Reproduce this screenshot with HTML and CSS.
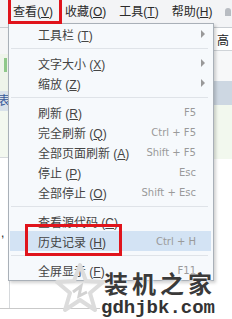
FILE: index.html
```html
<!DOCTYPE html>
<html>
<head>
<meta charset="utf-8">
<link rel="stylesheet" href="styles.css">
</head>
<body>
<div class="bar">
  <span class="mi m1">查看(<u>V</u>)</span>
  <span class="mi m2">收藏(<u>O</u>)</span>
  <span class="mi m3">工具(<u>T</u>)</span>
  <span class="mi m4">帮助(<u>H</u>)</span>
  <span class="pin"></span>
</div>
<div class="page">
  <div class="left">
    <div class="l-top"></div>
    <div class="l-green"><span class="gbar"></span></div>
    <div class="l-band">表</div>
    <div class="l-lgreen"></div>
    <div class="l-white"><span class="comma">,</span></div>
  </div>
  <div class="mid"></div>
  <div class="right">
    <div class="r-top">高</div>
    <div class="r-light"></div>
    <div class="r-band"></div>
    <div class="r-lgreen"></div>
    <div class="r-white"></div>
  </div>
</div>
<div class="bottomline"></div>

<div class="menu">
  <div class="row"><span class="lbl">工具栏 (<u>T</u>)</span><span class="arrow"></span></div>
  <div class="sep"></div>
  <div class="row"><span class="lbl">文字大小 (<u>X</u>)</span><span class="arrow"></span></div>
  <div class="row"><span class="lbl">缩放 (<u>Z</u>)</span><span class="arrow"></span></div>
  <div class="sep"></div>
  <div class="row"><span class="lbl">刷新 (<u>R</u>)</span><span class="key">F5</span></div>
  <div class="row"><span class="lbl">完全刷新 (<u>Q</u>)</span><span class="key">Ctrl + F5</span></div>
  <div class="row"><span class="lbl">全部页面刷新 (<u>A</u>)</span><span class="key">Shift + F5</span></div>
  <div class="row"><span class="lbl">停止 (<u>P</u>)</span><span class="key">Esc</span></div>
  <div class="row"><span class="lbl">全部停止 (<u>O</u>)</span><span class="key">Shift + Esc</span></div>
  <div class="sep"></div>
  <div class="row"><span class="lbl">查看源代码 (<u>C</u>)</span></div>
  <div class="row hl"><span class="lbl">历史记录 (<u>H</u>)</span><span class="key">Ctrl + H</span></div>
  <div class="sep"></div>
  <div class="row"><span class="lbl">全屏显示 (<u>F</u>)</span><span class="key">F11</span></div>
</div>

<div class="redbox"></div>
<div class="redtop"></div>

<svg class="star" width="50" height="52" viewBox="0 0 50 52">
  <path d="M25 3 L31 19 L48 20 L35 31 L40 48 L25 38 L10 48 L15 31 L2 20 L19 19 Z" fill="none" stroke="#dcdcdc" stroke-width="4" stroke-linejoin="round"/>
  <path d="M18 30 L26 24 L24 34 L32 30" fill="none" stroke="#d2d2d2" stroke-width="3"/>
</svg>
<div class="wm">
  <div class="wm1">装机之家</div>
  <div class="wm2">gdhjbk.com</div>
</div>
</body>
</html>
```

FILE: styles.css
```css
html, body {
  margin: 0;
  padding: 0;
}
body {
  width: 232px;
  height: 319px;
  overflow: hidden;
  background: #ffffff;
  font-family: "Liberation Sans", "Noto Sans CJK SC", sans-serif;
  position: relative;
}
u {
  text-decoration: underline;
  text-underline-offset: 1px;
}
.bar {
  height: 28px;
  background: #f3f4f6;
  border-bottom: 1px solid #c9cdd2;
  display: flex;
  align-items: flex-start;
  font-size: 12px;
  color: #2a2a2a;
  padding-left: 13px;
  box-sizing: border-box;
  white-space: nowrap;
  overflow: hidden;
}
.mi {
  flex-shrink: 0;
  line-height: 25px;
}
.m2 {
  margin-left: 12px;
}
.m3 {
  margin-left: 13px;
}
.m4 {
  margin-left: 13px;
}
.pin {
  flex-shrink: 0;
  margin-left: 13px;
  margin-top: 8px;
  width: 6px;
  height: 8px;
  border-radius: 3px 3px 0 0;
  background: #b8bcc2;
}
.page {
  display: flex;
  height: 280px;
}
.left {
  width: 9px;
  display: flex;
  flex-direction: column;
  border-right: 1px solid #d6d9dc;
}
.l-top {
  height: 26px;
  background: #f4f5f6;
}
.l-green {
  height: 37px;
  background: #eef4ea;
  position: relative;
}
.gbar {
  position: absolute;
  left: 4px;
  top: 4px;
  width: 3px;
  height: 14px;
  background: #8fc88a;
}
.l-band {
  height: 20px;
  background: #d9e2ea;
  font-size: 12px;
  line-height: 20px;
  color: #3a5b9a;
  text-indent: -2px;
  overflow: hidden;
}
.l-lgreen {
  height: 46px;
  background: #f3f8ef;
}
.l-white {
  flex: 1;
  background: #fff;
  border-top: 1px solid #d6d9dc;
  position: relative;
}
.comma {
  position: absolute;
  left: 1px;
  top: 68px;
  font-size: 12px;
  color: #222;
}
.mid {
  flex: 1;
  background: #fff;
}
.right {
  width: 18px;
  display: flex;
  flex-direction: column;
}
.r-top {
  height: 22px;
  font-size: 12px;
  line-height: 26px;
  color: #222;
  white-space: nowrap;
  overflow: hidden;
  padding-left: 3px;
  border-bottom: 1px solid #d0d4d8;
}
.r-light {
  height: 30px;
  background: #f7f8f9;
}
.r-band {
  height: 24px;
  background: #cdd7e2;
}
.r-lgreen {
  height: 54px;
  background: #f2f8ee;
}
.r-white {
  flex: 1;
  background: #fff;
}
.bottomline {
  position: absolute;
  left: 0;
  top: 308px;
  width: 100px;
  height: 1px;
  background: #c9c9c9;
}
.menu {
  position: absolute;
  left: 8px;
  top: 23px;
  width: 204px;
  background: #f6f9fc;
  border: 1px solid #a9b0b8;
  box-shadow: 2px 2px 3px rgba(0, 0, 0, 0.18);
  font-size: 12px;
  color: #444;
}
.row {
  height: 20px;
  display: flex;
  align-items: center;
  padding-left: 28px;
  padding-right: 15px;
  position: relative;
  margin: 0 2px 0 1px;
}
.row.hl {
  background: #d3e3f4;
}
.lbl {
  flex: 1;
  white-space: nowrap;
}
.key {
  color: #9a9a9a;
  font-family: "DejaVu Sans", sans-serif;
  font-size: 10px;
  white-space: nowrap;
}
.arrow {
  position: absolute;
  right: 6px;
  top: 6px;
  width: 0;
  height: 0;
  border-left: 4px solid #999;
  border-top: 4px solid transparent;
  border-bottom: 4px solid transparent;
}
.sep {
  height: 1px;
  background: #dfe3e8;
  margin: 4px 5px 4px 2px;
}
.redbox {
  position: absolute;
  left: 25px;
  top: 224px;
  width: 91px;
  height: 26px;
  border: 3px solid #e0141c;
}
.redtop {
  position: absolute;
  left: 8px;
  top: -3px;
  width: 48px;
  height: 21px;
  border: 3px solid #e0141c;
}
.star {
  position: absolute;
  left: 55px;
  top: 262px;
}
.wm {
  position: absolute;
  left: 98px;
  top: 267px;
  display: flex;
  flex-direction: column;
  align-items: center;
  width: 120px;
}
.wm1 {
  font-size: 24px;
  font-weight: bold;
  color: #3a3a3a;
  letter-spacing: 4px;
  margin-right: -4px;
  line-height: 32px;
  font-family: "Noto Sans CJK SC", sans-serif;
  text-shadow: 0 0 2px #fff, 0 0 2px #fff;
}
.wm2 {
  font-size: 19px;
  font-weight: bold;
  color: #333;
  font-family: "Liberation Mono", monospace;
  line-height: 18px;
  text-shadow: 0 0 2px #fff;
}
```
